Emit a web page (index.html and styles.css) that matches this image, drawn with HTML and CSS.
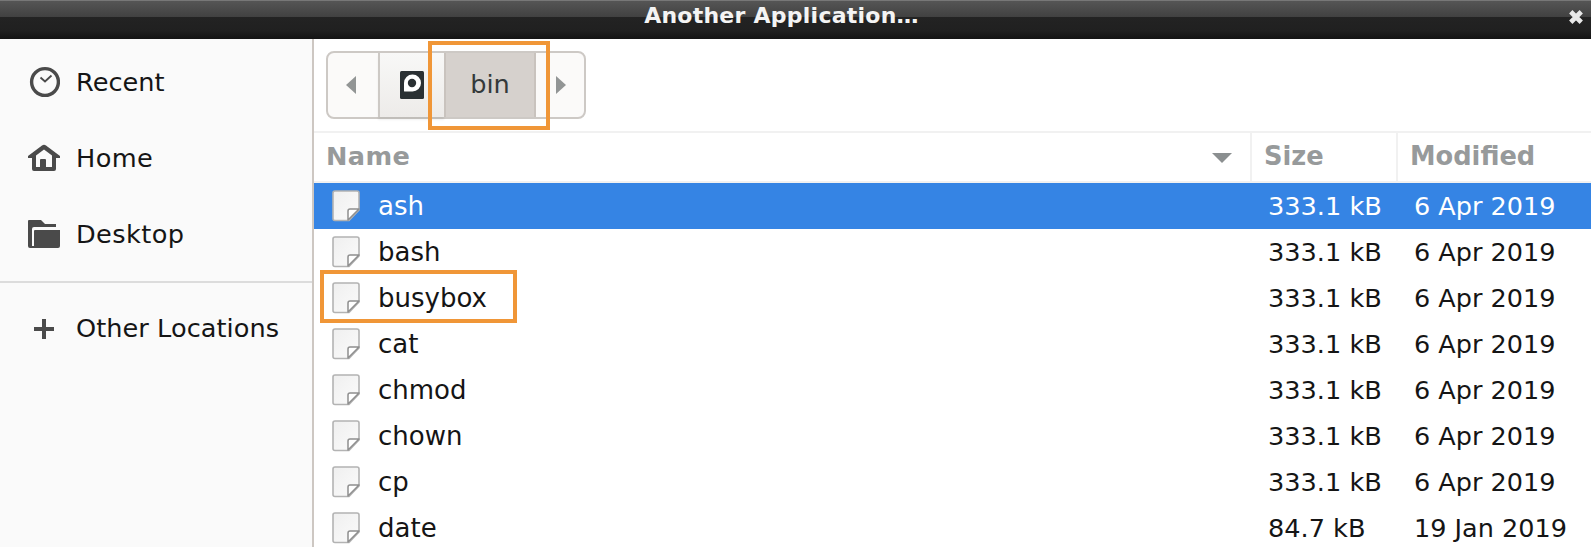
FILE: index.html
```html
<!DOCTYPE html>
<html lang="en">
<head>
<meta charset="utf-8">
<title>Another Application…</title>
<link rel="stylesheet" href="styles.css">
</head>
<body>
<svg class="defs" width="0" height="0">
  <linearGradient id="paper" x1="0" y1="0" x2="1" y2="1"><stop offset="0" stop-color="#efefef"/><stop offset="1" stop-color="#fbfbfb"/></linearGradient>
  <symbol id="file" viewBox="0 0 28 32">
    <path class="sheet" d="M3 1H25Q27 1 27 3V20L17 30.500H3Q1 30.500 1 28.500V3Q1 1 3 1Z"/>
    <path class="fold" d="M16 30V21Q16 19 18 19H27L16 30Z"/>
  </symbol>
</svg>
<div class="window">
  <header class="titlebar">
    <span class="title">Another Application…</span>
    <svg class="close" viewBox="0 0 12 12"><path d="M1.500 1.500L10.500 10.500M10.500 1.500L1.500 10.500" stroke="#e8e8e8" stroke-width="4"/></svg>
  </header>
  <div class="body">
    <nav class="sidebar">
      <div class="place">
        <svg viewBox="0 0 32 32"><circle cx="17" cy="16" r="13.400" fill="none" stroke="#4a4a4a" stroke-width="3.400"/><path d="M12.500 11.500L17 15.500L23.500 9.500" fill="none" stroke="#4a4a4a" stroke-width="1.800"/></svg>
        <span>Recent</span>
      </div>
      <div class="place">
        <svg viewBox="0 0 32 32"><path fill="#4a4a4a" fill-rule="evenodd" d="M0 14L14 3.500Q16 2 18 3.500L32 14V16H28V27Q28 29 26 29H6Q4 29 4 27V16H0ZM8 13.500V25H12V18Q12 17 13 17H17Q18 17 18 18V25H24V13.500L16 7.500Z"/></svg>
        <span class="wide">Home</span>
      </div>
      <div class="place">
        <svg viewBox="0 0 32 32"><path fill="#4a4a4a" d="M0 3Q0 2 1 2H13L17 6H28V9H6Q4 9 4 11V28H6V13Q6 12 7 12H32V28Q32 30 30 30H2Q0 30 0 28Z"/></svg>
        <span class="wide">Desktop</span>
      </div>
      <div class="separator"></div>
      <div class="place other">
        <svg viewBox="0 0 32 32"><path d="M6 17H26M16 7V27" stroke="#4a4a4a" stroke-width="4"/></svg>
        <span>Other Locations</span>
      </div>
    </nav>
    <main class="main">
      <div class="toolbar">
        <div class="pathbar">
          <div class="step prev"><svg viewBox="0 0 10 18"><path d="M10 0V18L0 9Z" fill="#929595"/></svg></div>
          <div class="step disk"><svg viewBox="0 0 24 28"><rect width="24" height="28" rx="1.500" fill="#2a3033"/><path d="M4 20V12A8.500 8.500 0 1 1 12.500 20.500H5Q4 20.500 4 20Z" fill="#fff"/><circle cx="12" cy="12" r="4.200" fill="#2a3033"/></svg></div>
          <div class="step bin">bin</div>
          <div class="step next"><svg viewBox="0 0 10 18"><path d="M0 0V18L10 9Z" fill="#929595"/></svg></div>
          <div class="mark mark-path"></div>
        </div>
      </div>
      <div class="row head">
        <div class="name"><span class="wide">Name</span><svg viewBox="0 0 20 10"><path d="M0 0H20L10 10Z" fill="#8b8f90"/></svg></div>
        <div class="size">Size</div>
        <div class="date">Modified</div>
      </div>
      <div class="row selected"><div class="name"><svg><use href="#file"/></svg>ash</div><div class="size">333.1 kB</div><div class="date">6 Apr 2019</div></div>
      <div class="row"><div class="name"><svg><use href="#file"/></svg>bash</div><div class="size">333.1 kB</div><div class="date">6 Apr 2019</div></div>
      <div class="row"><div class="mark mark-file"></div><div class="name"><svg><use href="#file"/></svg>busybox</div><div class="size">333.1 kB</div><div class="date">6 Apr 2019</div></div>
      <div class="row"><div class="name"><svg><use href="#file"/></svg>cat</div><div class="size">333.1 kB</div><div class="date">6 Apr 2019</div></div>
      <div class="row"><div class="name"><svg><use href="#file"/></svg>chmod</div><div class="size">333.1 kB</div><div class="date">6 Apr 2019</div></div>
      <div class="row"><div class="name"><svg><use href="#file"/></svg>chown</div><div class="size">333.1 kB</div><div class="date">6 Apr 2019</div></div>
      <div class="row"><div class="name"><svg><use href="#file"/></svg>cp</div><div class="size">333.1 kB</div><div class="date">6 Apr 2019</div></div>
      <div class="row"><div class="name"><svg><use href="#file"/></svg>date</div><div class="size">84.7 kB</div><div class="date">19 Jan 2019</div></div>
    </main>
  </div>
</div>
</body>
</html>
```
FILE: styles.css
```css
* { box-sizing: border-box; }
body { margin: 0; background: #fff; color: #151515; font: 25.6px/32px "DejaVu Sans", sans-serif; }
.defs { position: absolute; }
.window { display: flex; flex-direction: column; width: 1591px; height: 547px; overflow: hidden; }
.titlebar {
  display: grid; grid-template-columns: 40px 1fr 40px; flex: none; height: 39px;
  border-top: 1px solid #777;
  background: linear-gradient(#555 0, #414141 16px, #232323 16px, #202020 30px, #141414 38px);
  color: #f4f4f4; font-weight: bold; font-size: 22px; line-height: 30px; letter-spacing: .25px;
}
.title { grid-column: 2; text-align: center; padding-right: 28px; }
.close { width: 14px; height: 14px; margin: 9px 0 0 18px; }
.body { display: flex; flex: 1; min-height: 0; }
.sidebar { flex: none; width: 314px; padding-top: 5px; background: #fafafa; border-right: 2px solid #cdc7c2; }
.place { display: flex; align-items: center; gap: 16px; height: 76px; padding-left: 28px; }
.place svg { width: 32px; height: 32px; }
.place span { white-space: nowrap; }
.other { padding-bottom: 2px; letter-spacing: .05px; }
.wide { letter-spacing: .4px; }
.separator { height: 2px; margin: 9px 0 8px; background: #dcdcdc; }
.main { flex: 1; min-width: 0; }
.toolbar { height: 92px; padding: 12px 0 0 12px; }
.pathbar { position: relative; display: flex; width: 260px; height: 68px; border: 2px solid #cdc9c5; border-radius: 8px; background: #fbfaf9; }
.step { display: flex; align-items: center; justify-content: center; }
.step svg { width: 10px; height: 18px; }
.prev { width: 50px; }
.prev svg { margin-right: 4px; }
.disk { width: 66px; border-left: 2px solid #cdc9c5; background: linear-gradient(#f8f8f7, #edebe9); box-shadow: 0 3px 2px rgba(0,0,0,.06); }
.disk svg { width: 24px; height: 28px; margin-bottom: 1px; }
.bin { width: 92px; padding-bottom: 2px; border: solid #c9c3be; border-width: 0 2px; background: #d6d1cd; color: #34393a; }
.next { flex: 1; }
.next svg { margin-left: 2px; }
.mark { position: absolute; border: 4px solid #f09637; }
.mark-path { left: 100px; top: -12px; width: 122px; height: 89px; }
.mark-file { left: 6px; top: -5px; width: 197px; height: 53px; }
.row { position: relative; display: grid; grid-template-columns: 936px 146px 195px; height: 46px; align-items: center; font-size: 26px; white-space: nowrap; }
.name { display: flex; align-items: center; padding-left: 18px; }
.row svg { width: 28px; height: 32px; margin-right: 18px; }
.size { padding-left: 18px; font-size: 25.6px; }
.date { padding-left: 18px; font-size: 25.5px; }
.sheet { fill: url(#paper); stroke: #b3b3b3; stroke-width: 1.6; }
.fold { fill: #fff; stroke: #8f8f8f; stroke-width: 1.5; stroke-linejoin: round; }
.selected { background: #3584e4; color: #fff; }
.selected .sheet { fill: #fff; stroke: #2464b4; }
.selected .fold { stroke: #59708c; }
.head { height: 52px; align-items: stretch; border-top: 2px solid #f1f1f1; border-bottom: 2px solid #f1f1f1; color: #979a9b; font-weight: bold; font-size: 25.6px; line-height: 46px; }
.head .name { justify-content: space-between; padding: 0 0 2px 12px; }
.head .name svg { width: 20px; height: 10px; margin: 4px 18px 0 0; }
.head .size, .head .date { border-left: 2px solid #f1f1f1; padding-left: 12px; font-size: 25.7px; }
```
